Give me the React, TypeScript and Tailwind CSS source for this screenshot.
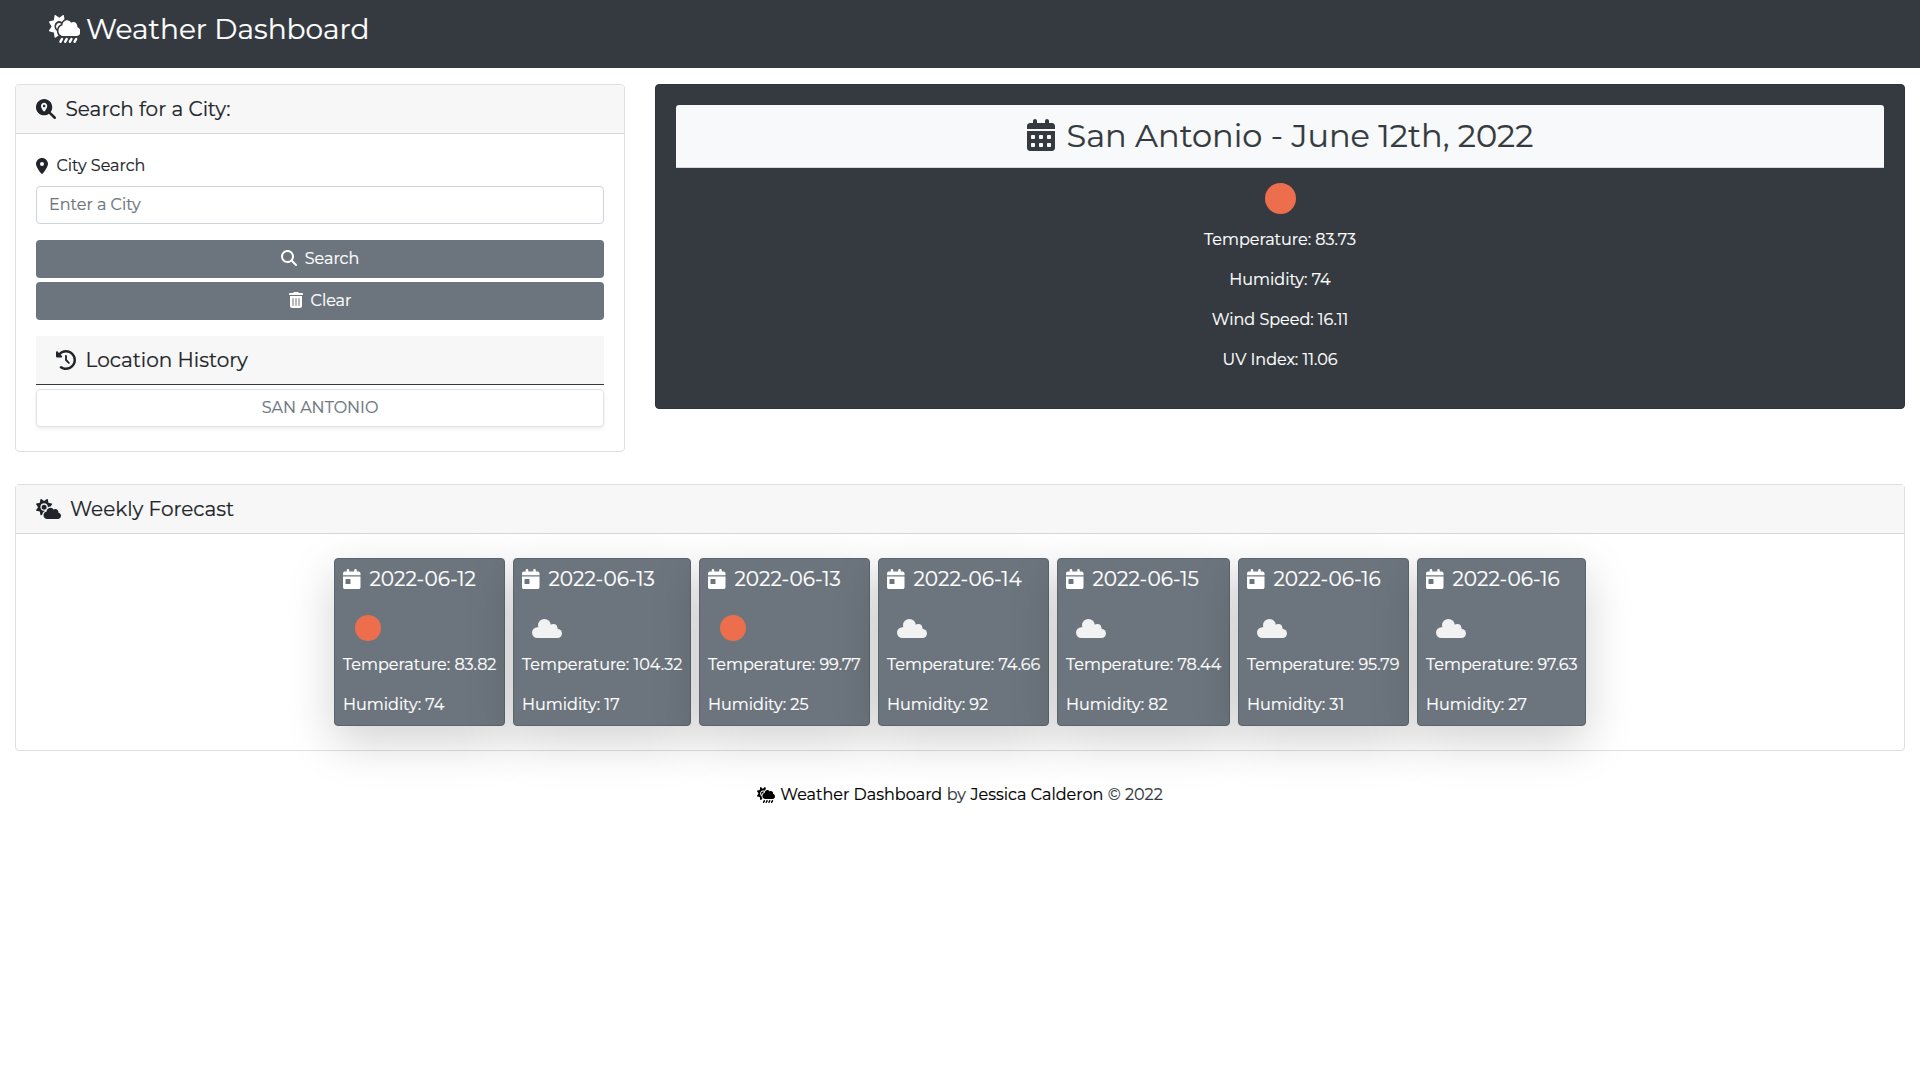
import type { ReactNode } from "react";
import {
  FaCalendarDay,
  FaCalendarDays,
  FaClockRotateLeft,
  FaCloudSun,
  FaCloudSunRain,
  FaLocationDot,
  FaMagnifyingGlass,
  FaMagnifyingGlassLocation,
  FaTrashCan,
} from "react-icons/fa6";

type Sky = "clear" | "clouds";

interface Day {
  date: string;
  sky: Sky;
  temp: string;
  humidity: string;
  width: string;
}

const days: Day[] = [
  { date: "2022-06-12", sky: "clear", temp: "83.82", humidity: "74", width: "w-[171px]" },
  { date: "2022-06-13", sky: "clouds", temp: "104.32", humidity: "17", width: "w-[178px]" },
  { date: "2022-06-13", sky: "clear", temp: "99.77", humidity: "25", width: "w-[171px]" },
  { date: "2022-06-14", sky: "clouds", temp: "74.66", humidity: "92", width: "w-[171px]" },
  { date: "2022-06-15", sky: "clouds", temp: "78.44", humidity: "82", width: "w-[173px]" },
  { date: "2022-06-16", sky: "clouds", temp: "95.79", humidity: "31", width: "w-[171px]" },
  { date: "2022-06-16", sky: "clouds", temp: "97.63", humidity: "27", width: "w-[169px]" },
];

function Cloud() {
  return (
    <svg width="30" height="19" viewBox="0 0 30 19" fill="#f2f2f2">
      <circle cx="5.4" cy="13.6" r="5.4" />
      <circle cx="12.4" cy="6.4" r="6.4" />
      <circle cx="21.3" cy="9" r="4" />
      <circle cx="25.5" cy="14.5" r="4.5" />
      <rect x="5.4" y="8.5" width="20.1" height="10.5" />
    </svg>
  );
}

function CardHeader({ icon, children }: { icon: ReactNode; children: ReactNode }) {
  return (
    <div className="flex h-[49px] items-center border-b border-[#d6d7d8] bg-[#f7f7f7] px-5 text-xl leading-6">
      {icon}
      {children}
    </div>
  );
}

function ForecastCard({ day }: { day: Day }) {
  return (
    <div
      className={`${day.width} h-[168px] rounded border border-[#5c656c] bg-[#6c757d] px-2 pt-2 text-white shadow-[0_16px_48px_rgba(0,0,0,0.175)]`}
    >
      <div className="flex h-6 items-center text-xl">
        <FaCalendarDay className="mb-px h-5 w-[17.5px]" />
        <span className="ml-[9px]">{day.date}</span>
      </div>
      <div className="mt-3 flex h-[50px] w-[50px] items-center justify-center">
        {day.sky === "clear" ? <div className="size-[25.5px] rounded-full bg-[#ec6e4c]" /> : <Cloud />}
      </div>
      <p className="leading-6 whitespace-nowrap">Temperature: {day.temp}</p>
      <p className="mt-4 leading-6 whitespace-nowrap">Humidity: {day.humidity}</p>
    </div>
  );
}

export default function App() {
  return (
    <div className="min-h-screen bg-white font-['Montserrat','Inter',sans-serif] text-base text-[#212529] [-webkit-text-stroke:0.2px]">
      <header className="flex h-[68px] items-start bg-[#343a40] px-12 pt-2 text-white">
        <div className="flex h-[42px] items-center text-[28px]">
          <FaCloudSunRain preserveAspectRatio="none" className="mb-px ml-[0.5px] h-7 w-[31.5px]" />
          <span className="ml-[6px]">Weather Dashboard</span>
        </div>
      </header>

      <main className="px-[15px] pt-4">
        <div className="flex items-start gap-[30px]">
          <section className="h-[368px] w-[610px] overflow-hidden rounded border border-[#dfdfdf]">
            <CardHeader icon={<FaMagnifyingGlassLocation className="mr-[9.5px] mb-px size-5" />}>
              Search for a City:
            </CardHeader>
            <div className="p-5">
              <label className="flex h-6 items-center">
                <FaLocationDot className="mr-[8.5px] mb-px h-4 w-3" />
                City Search
              </label>
              <input
                className="mt-2 block h-[38px] w-full rounded border border-[#ced4da] bg-white px-3 pb-px outline-none placeholder:text-[#6c757d]"
                placeholder="Enter a City"
              />
              <button className="mt-4 flex h-[38px] w-full items-center justify-center rounded bg-[#6c757d] text-white">
                <FaMagnifyingGlass className="mr-2 mb-0.5 size-4" />
                Search
              </button>
              <button className="mt-1 flex h-[38px] w-full items-center justify-center rounded bg-[#6c757d] text-white">
                <FaTrashCan className="mr-2 mb-0.5 h-4 w-3.5" />
                Clear
              </button>
              <div className="mt-4 flex h-[49px] items-center border-b border-[#343a40] bg-[#f7f7f7] px-5 text-xl leading-6">
                <FaClockRotateLeft className="mr-[9.5px] mb-px size-5" />
                Location History
              </div>
              <button className="mt-1 flex h-[38px] w-full items-center justify-center rounded border border-[#dee2e6] bg-white text-[#6c757d] shadow-[0_2px_4px_rgba(0,0,0,0.075)]">
                SAN ANTONIO
              </button>
            </div>
          </section>

          <section className="h-[325px] w-[1250px] rounded border border-[#2d3338] bg-[#343a40] p-5 text-center text-white">
            <div className="flex h-[63px] items-center justify-center rounded-t-[3px] border-b border-[#d6d8da] bg-[#f8f9fa] text-[32px] text-[#343a40]">
              <FaCalendarDays className="mr-3 mb-0.5 h-8 w-7" />
              San Antonio - June 12th, 2022
            </div>
            <div className="flex h-[60px] items-center justify-center">
              <div className="size-[31px] rounded-full bg-[#ec6e4c]" />
            </div>
            <div className="flex flex-col gap-4 leading-6">
              <p>Temperature: 83.73</p>
              <p>Humidity: 74</p>
              <p>Wind Speed: 16.11</p>
              <p>UV Index: 11.06</p>
            </div>
          </section>
        </div>

        <section className="mt-8 h-[267px] rounded border border-[#dfdfdf]">
          <CardHeader icon={<FaCloudSun className="mr-[9px] mb-px h-5 w-[25px]" />}>Weekly Forecast</CardHeader>
          <div className="flex justify-center gap-2 pt-6">
            {days.map((day, i) => (
              <ForecastCard key={i} day={day} />
            ))}
          </div>
        </section>
      </main>

      <footer className="mt-8 flex items-center justify-center leading-6 text-[#343a40]">
        <FaCloudSunRain preserveAspectRatio="none" className="h-4 w-[18px] text-black" />
        <span className="ml-[5px] text-black">Weather Dashboard</span>
        <span className="ml-[4.5px]">by</span>
        <span className="ml-[4.5px] text-black">Jessica Calderon</span>
        <span className="ml-[4.5px]">© 2022</span>
      </footer>
    </div>
  );
}
